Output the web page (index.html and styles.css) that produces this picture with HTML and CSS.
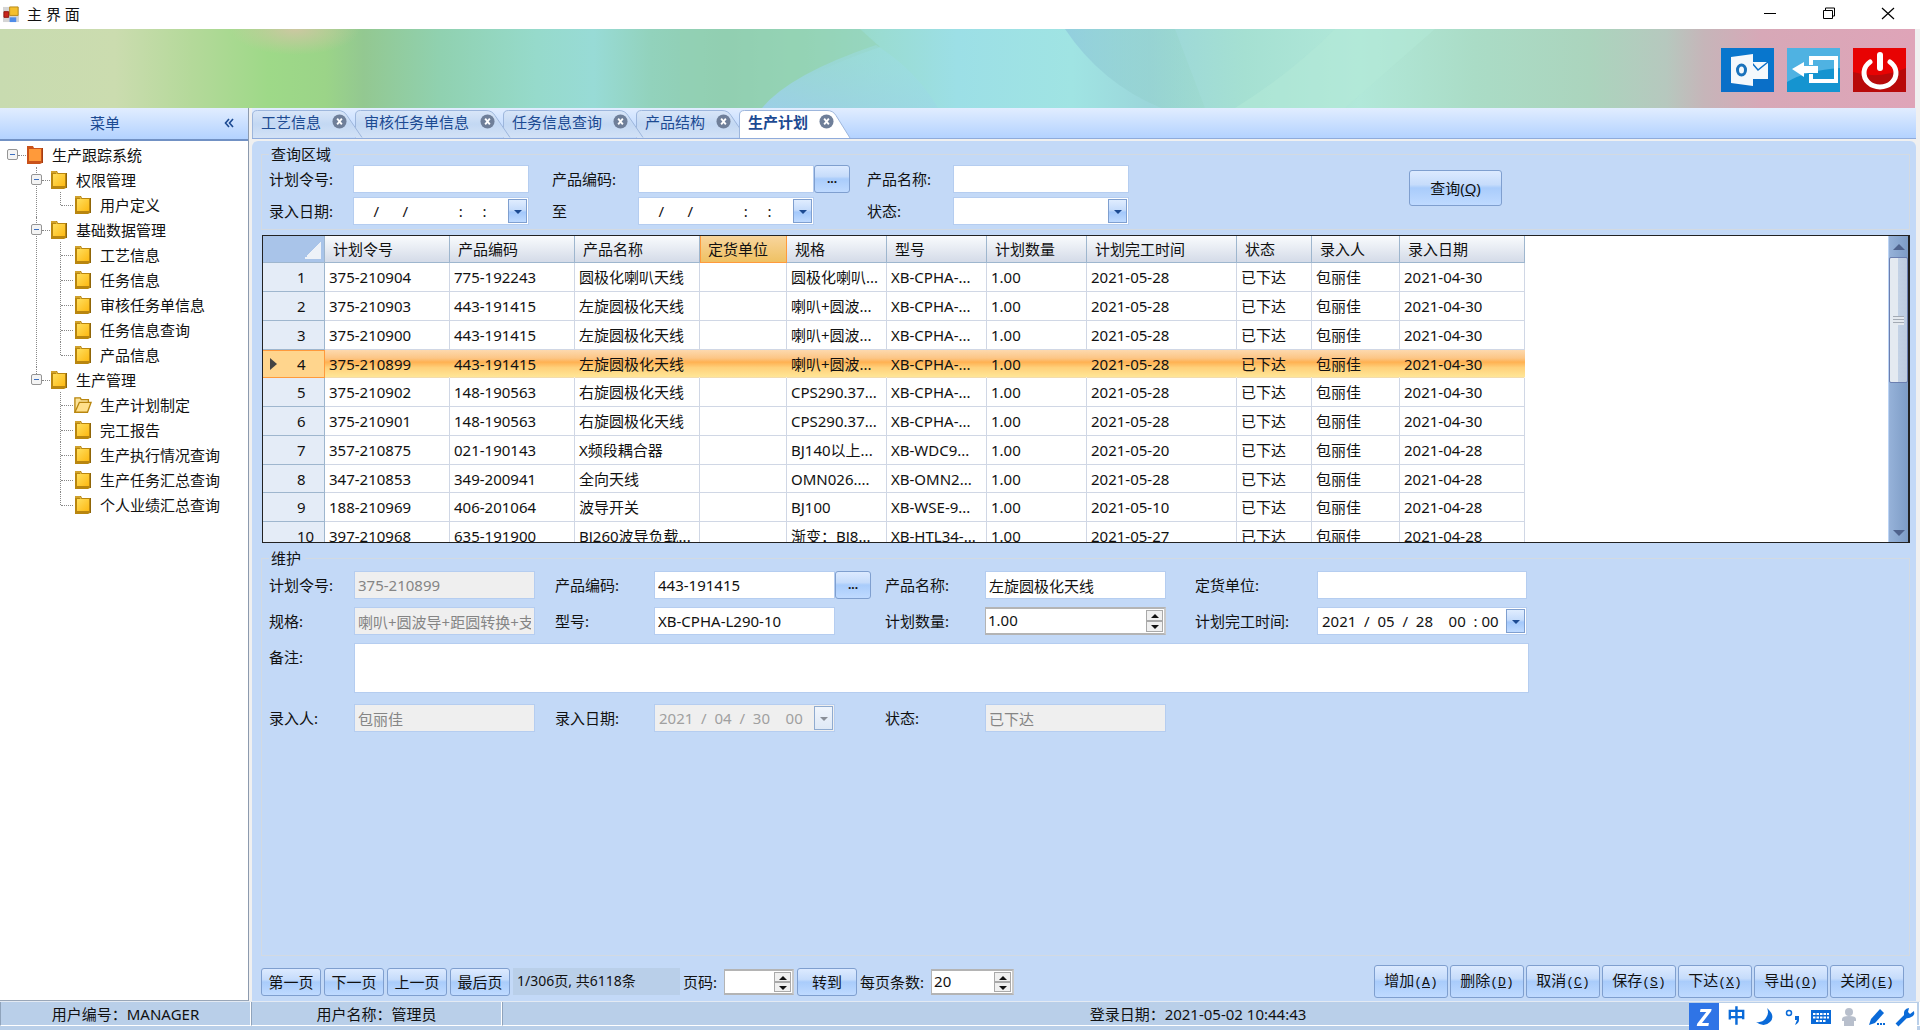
FILE: index.html
```html
<!DOCTYPE html>
<html lang="zh-CN">
<head>
<meta charset="utf-8">
<title>主界面</title>
<link rel="stylesheet" href="styles.css">
</head>
<body>
<svg class="defs" aria-hidden="true">
  <defs>
    <linearGradient id="gold" x1="0" y1="0" x2="1" y2="1"><stop offset="0" stop-color="#ffdf5e"/><stop offset="1" stop-color="#fdb913"/></linearGradient>
    <symbol id="folder" viewBox="0 0 18 20">
      <path d="M1 3V1h6l1 2h8v15l-2 1H1z" fill="#b9860f"/>
      <path d="M3 4h12v12H3z" fill="url(#gold)"/>
      <path d="M1 2h5l1 2" fill="none" stroke="#e8bf4a"/>
      <path d="M16.500 3v15" stroke="#8f6508"/>
    </symbol>
    <symbol id="folder-root" viewBox="0 0 18 20">
      <path d="M1 3V1h6l1 2h8v15l-2 1H1z" fill="#c9521a"/>
      <path d="M3 4h12v12H3z" fill="#ff9a3a"/>
      <path d="M16.500 3v15" stroke="#a33c10"/>
    </symbol>
    <symbol id="folder-open" viewBox="0 0 20 20">
      <path d="M1 18V2h6l1 2h8v4" fill="#fbe39a" stroke="#b9860f" stroke-width="1.500"/>
      <path d="M1 18L6 7h13l-4 11z" fill="#ffe08a" stroke="#b9860f" stroke-width="1.500"/>
    </symbol>
    <symbol id="close" viewBox="0 0 16 16">
      <circle cx="8" cy="8" r="7.500" fill="#6f7f99"/>
      <path d="M5.500 5l5 6M10.500 5l-5 6" stroke="#fff" stroke-width="2"/>
    </symbol>
    <linearGradient id="tabfill" x1="0" y1="0" x2="0" y2="1"><stop offset="0" stop-color="#d9e6f8"/><stop offset=".5" stop-color="#c3d8f3"/><stop offset="1" stop-color="#d3e2f6"/></linearGradient>
  </defs>
</svg>

<header class="titlebar">
  <svg class="app-icon" viewBox="0 0 18 18" aria-hidden="true"><path d="M0 1h17v16H0z" fill="#d5d5d5"/><path d="M7 1h9v9H7z" fill="#f4bf2d" stroke="#b98a18"/><path d="M1 6h5v6H1z" fill="#c9261c" stroke="#8e150d"/><path d="M7 12h7v5H7z" fill="#4f8ce8"/></svg>
  <h1>主 界 面</h1>
  <div class="win-buttons">
    <button aria-label="最小化"><svg viewBox="0 0 14 14"><path d="M1 6.500h12" stroke="#000"/></svg></button>
    <button aria-label="还原"><svg viewBox="0 0 14 14"><path d="M1.500 3.500h9v8h-9zM3.500 3V1h9v8h-2" fill="none" stroke="#000"/></svg></button>
    <button aria-label="关闭"><svg viewBox="0 0 14 14"><path d="M1 1l12 11M13 1l-12 11" stroke="#000" stroke-width="1.200"/></svg></button>
  </div>
</header>

<div class="banner">
  <svg class="banner-art" viewBox="0 0 1915 79" preserveAspectRatio="none" aria-hidden="true">
    <defs>
      <linearGradient id="art">
        <stop offset="0" stop-color="#c8dbb0"/><stop offset=".06" stop-color="#cbdcaf"/><stop offset=".1" stop-color="#b4d99a"/><stop offset=".14" stop-color="#9ed988"/><stop offset=".17" stop-color="#9bd488"/><stop offset=".19" stop-color="#93c891"/><stop offset=".23" stop-color="#90d1b0"/><stop offset=".28" stop-color="#96dacb"/><stop offset=".31" stop-color="#98dbd6"/><stop offset=".34" stop-color="#92d2bc"/><stop offset=".38" stop-color="#8fccaf"/><stop offset=".42" stop-color="#96d6b8"/><stop offset=".46" stop-color="#9adcd2"/><stop offset=".5" stop-color="#9cdfe6"/><stop offset=".56" stop-color="#a0e4e3"/><stop offset=".6" stop-color="#9bd6da"/><stop offset=".65" stop-color="#a5e0d2"/><stop offset=".71" stop-color="#b1e8d9"/><stop offset=".77" stop-color="#aadcc6"/><stop offset=".83" stop-color="#abd4bd"/><stop offset=".87" stop-color="#b6c8be"/><stop offset=".89" stop-color="#c6b5b9"/><stop offset=".92" stop-color="#d7a8b7"/><stop offset="1" stop-color="#dfa4b8"/>
      </linearGradient>
      <radialGradient id="rose"><stop offset="0" stop-color="#d8c4a8"/><stop offset="1" stop-color="#d8c4a8" stop-opacity="0"/></radialGradient>
      <linearGradient id="sky" x1="0" y1="1" x2="1" y2="0"><stop offset="0" stop-color="#9ccfe6"/><stop offset="1" stop-color="#9ce0e4" stop-opacity=".3"/></linearGradient>
      <linearGradient id="fade"><stop offset="0" stop-color="#8fc9dd" stop-opacity=".8"/><stop offset="1" stop-color="#93d4bd" stop-opacity=".2"/></linearGradient>
    </defs>
    <path d="M0 0h1915v79H0z" fill="url(#art)"/>
    <ellipse cx="295" cy="0" rx="65" ry="26" fill="url(#rose)" opacity=".8"/>
    <path d="M680 79V0h180l20 18Q800 45 762 79z" fill="#93d2b2" opacity=".55"/>
    <path d="M762 79Q790 45 876 16q40 25 62 63z" fill="url(#sky)"/>
    <path d="M1065 0h110l30 79h-44q-60-25-96-79z" fill="url(#fade)"/>
    <path d="M1235 79Q1290 45 1335 0h100l-90 79z" fill="#b3ead8" opacity=".5"/>
  </svg>
  <div class="banner-buttons">
    <button aria-label="邮件"><svg viewBox="0 0 53 44" preserveAspectRatio="none"><path d="M0 0h53v44H0z" fill="#0a6fc8"/><path d="M0 0h53v22H0z" fill="#067bd0" opacity=".6"/><path d="M31 14h16v17H31z" fill="#f4f8fc"/><path d="M31 15l6 7 10-8" fill="none" stroke="#0a6fc8" stroke-width="1.500"/><path d="M10 9l22-3v32l-22-3z" fill="#f4f8fc"/><ellipse cx="20.500" cy="22" rx="4" ry="5" fill="none" stroke="#1a72bc" stroke-width="3"/></svg></button>
    <button aria-label="注销"><svg viewBox="0 0 53 44" preserveAspectRatio="none"><path d="M0 0h53v44H0z" fill="#1594d0"/><path d="M0 0h53v20Q20 22 0 34z" fill="#4fb2e2"/><path d="M24 17V10h25v23H24v-7" fill="none" stroke="#fff" stroke-width="4"/><path d="M5 21l12-7v4h14v7H17v4z" fill="#fff"/></svg></button>
    <button aria-label="退出"><svg viewBox="0 0 53 44" preserveAspectRatio="none"><path d="M0 0h53v44H0z" fill="#b80a0a"/><path d="M0 0h53v20Q26 32 0 24z" fill="#e80303"/><path d="M17 14A16 14 0 1 0 37 14" fill="none" stroke="#fff" stroke-width="5" stroke-linecap="round"/><path d="M27 7v13" stroke="#fff" stroke-width="6" stroke-linecap="round"/></svg></button>
  </div>
</div>

<div class="workspace">
  <nav class="sidebar">
    <div class="side-head"><h2>菜单</h2><button aria-label="折叠菜单"><svg viewBox="0 0 10 10"><path d="M5 1L1.500 5 5 9M9 1L5.500 5 9 9" fill="none" stroke="#1c4a92" stroke-width="1.600"/></svg></button></div>
    <ul class="tree">
      <li><div class="node"><button class="toggle" aria-label="折叠"></button><svg><use href="#folder-root"/></svg><a href="#">生产跟踪系统</a></div>
        <ul>
          <li><div class="node"><button class="toggle" aria-label="折叠"></button><svg><use href="#folder"/></svg><a href="#">权限管理</a></div>
            <ul>
              <li><div class="node leaf"><svg><use href="#folder"/></svg><a href="#">用户定义</a></div></li>
            </ul></li>
          <li><div class="node"><button class="toggle" aria-label="折叠"></button><svg><use href="#folder"/></svg><a href="#">基础数据管理</a></div>
            <ul>
              <li><div class="node leaf"><svg><use href="#folder"/></svg><a href="#">工艺信息</a></div></li>
              <li><div class="node leaf"><svg><use href="#folder"/></svg><a href="#">任务信息</a></div></li>
              <li><div class="node leaf"><svg><use href="#folder"/></svg><a href="#">审核任务单信息</a></div></li>
              <li><div class="node leaf"><svg><use href="#folder"/></svg><a href="#">任务信息查询</a></div></li>
              <li><div class="node leaf"><svg><use href="#folder"/></svg><a href="#">产品信息</a></div></li>
            </ul></li>
          <li><div class="node"><button class="toggle" aria-label="折叠"></button><svg><use href="#folder"/></svg><a href="#">生产管理</a></div>
            <ul>
              <li><div class="node leaf"><svg><use href="#folder-open"/></svg><a href="#">生产计划制定</a></div></li>
              <li><div class="node leaf"><svg><use href="#folder"/></svg><a href="#">完工报告</a></div></li>
              <li><div class="node leaf"><svg><use href="#folder"/></svg><a href="#">生产执行情况查询</a></div></li>
              <li><div class="node leaf"><svg><use href="#folder"/></svg><a href="#">生产任务汇总查询</a></div></li>
              <li><div class="node leaf"><svg><use href="#folder"/></svg><a href="#">个人业绩汇总查询</a></div></li>
            </ul></li>
        </ul></li>
    </ul>
  </nav>

  <main class="content">
    <div class="tabs">
      <div class="tab"><svg class="tab-shape" viewBox="0 0 112 28"><path d="M.5 28V5q0-4.500 5-4.500H86q6 0 9 5L110 27.500" fill="url(#tabfill)" stroke="#9db6dc"/></svg><button class="tab-label">工艺信息</button><button class="tab-close" aria-label="关闭"><svg><use href="#close"/></svg></button></div>
      <div class="tab"><svg class="tab-shape" viewBox="0 0 157 28"><path d="M.5 28V5q0-4.500 5-4.500H131q6 0 9 5L155 27.500" fill="url(#tabfill)" stroke="#9db6dc"/></svg><button class="tab-label">审核任务单信息</button><button class="tab-close" aria-label="关闭"><svg><use href="#close"/></svg></button></div>
      <div class="tab"><svg class="tab-shape" viewBox="0 0 142 28"><path d="M.5 28V5q0-4.500 5-4.500H116q6 0 9 5L140 27.500" fill="url(#tabfill)" stroke="#9db6dc"/></svg><button class="tab-label">任务信息查询</button><button class="tab-close" aria-label="关闭"><svg><use href="#close"/></svg></button></div>
      <div class="tab"><svg class="tab-shape" viewBox="0 0 112 28"><path d="M.5 28V5q0-4.500 5-4.500H86q6 0 9 5L110 27.500" fill="url(#tabfill)" stroke="#9db6dc"/></svg><button class="tab-label">产品结构</button><button class="tab-close" aria-label="关闭"><svg><use href="#close"/></svg></button></div>
      <div class="tab active"><svg class="tab-shape" viewBox="0 0 112 28"><path d="M.5 28V5q0-4.500 5-4.500H88q6 0 9 5L111 28" fill="#fff" stroke="#9db6dc"/></svg><button class="tab-label">生产计划</button><button class="tab-close" aria-label="关闭"><svg><use href="#close"/></svg></button></div>
    </div>

    <div class="page">
      <fieldset class="search">
        <legend>查询区域</legend>
        <div class="search-grid">
          <label for="q1">计划令号:</label><input id="q1" class="w176">
          <label for="q2">产品编码:</label><div class="pair"><input id="q2" class="w176"><button class="btn pick">...</button></div>
          <label for="q3">产品名称:</label><input id="q3" class="w176">
          <label for="q4">录入日期:</label><div class="combo w176"><input id="q4" value="    /      /             :     :"><button class="drop" aria-label="展开"></button></div>
          <label for="q5">至</label><div class="combo w176"><input id="q5" value="    /      /             :     :"><button class="drop" aria-label="展开"></button></div>
          <label for="q6">状态:</label><div class="combo w176"><select id="q6"><option></option></select><span class="drop"></span></div>
          <button class="btn query">查询(<u>Q</u>)</button>
        </div>
      </fieldset>

      <div class="grid-wrap">
        <div class="grid-view">
          <table>
            <colgroup><col class="c62"><col class="c125"><col class="c125"><col class="c125"><col class="c87"><col class="c100"><col class="c100"><col class="c100"><col class="c150"><col class="c75"><col class="c88"><col class="c125"></colgroup>
            <thead><tr><th class="corner"></th><th>计划令号</th><th>产品编码</th><th>产品名称</th><th class="hot">定货单位</th><th>规格</th><th>型号</th><th>计划数量</th><th>计划完工时间</th><th>状态</th><th>录入人</th><th>录入日期</th></tr></thead>
            <tbody>
              <tr><th>1</th><td>375-210904</td><td>775-192243</td><td>圆极化喇叭天线</td><td></td><td>圆极化喇叭...</td><td>XB-CPHA-...</td><td>1.00</td><td>2021-05-28</td><td>已下达</td><td>包丽佳</td><td>2021-04-30</td></tr>
              <tr><th>2</th><td>375-210903</td><td>443-191415</td><td>左旋圆极化天线</td><td></td><td>喇叭+圆波...</td><td>XB-CPHA-...</td><td>1.00</td><td>2021-05-28</td><td>已下达</td><td>包丽佳</td><td>2021-04-30</td></tr>
              <tr><th>3</th><td>375-210900</td><td>443-191415</td><td>左旋圆极化天线</td><td></td><td>喇叭+圆波...</td><td>XB-CPHA-...</td><td>1.00</td><td>2021-05-28</td><td>已下达</td><td>包丽佳</td><td>2021-04-30</td></tr>
              <tr class="selected"><th>4</th><td>375-210899</td><td>443-191415</td><td>左旋圆极化天线</td><td></td><td>喇叭+圆波...</td><td>XB-CPHA-...</td><td>1.00</td><td>2021-05-28</td><td>已下达</td><td>包丽佳</td><td>2021-04-30</td></tr>
              <tr><th>5</th><td>375-210902</td><td>148-190563</td><td>右旋圆极化天线</td><td></td><td>CPS290.37...</td><td>XB-CPHA-...</td><td>1.00</td><td>2021-05-28</td><td>已下达</td><td>包丽佳</td><td>2021-04-30</td></tr>
              <tr><th>6</th><td>375-210901</td><td>148-190563</td><td>右旋圆极化天线</td><td></td><td>CPS290.37...</td><td>XB-CPHA-...</td><td>1.00</td><td>2021-05-28</td><td>已下达</td><td>包丽佳</td><td>2021-04-30</td></tr>
              <tr><th>7</th><td>357-210875</td><td>021-190143</td><td>X频段耦合器</td><td></td><td>BJ140以上...</td><td>XB-WDC9...</td><td>1.00</td><td>2021-05-20</td><td>已下达</td><td>包丽佳</td><td>2021-04-28</td></tr>
              <tr><th>8</th><td>347-210853</td><td>349-200941</td><td>全向天线</td><td></td><td>OMN026....</td><td>XB-OMN2...</td><td>1.00</td><td>2021-05-28</td><td>已下达</td><td>包丽佳</td><td>2021-04-28</td></tr>
              <tr><th>9</th><td>188-210969</td><td>406-201064</td><td>波导开关</td><td></td><td>BJ100</td><td>XB-WSE-9...</td><td>1.00</td><td>2021-05-10</td><td>已下达</td><td>包丽佳</td><td>2021-04-28</td></tr>
              <tr><th>10</th><td>397-210968</td><td>635-191900</td><td>BJ260波导负载...</td><td></td><td>渐变：BJ8...</td><td>XB-HTL34-...</td><td>1.00</td><td>2021-05-27</td><td>已下达</td><td>包丽佳</td><td>2021-04-28</td></tr>
            </tbody>
          </table>
        </div>
        <div class="scrollbar" aria-hidden="true"><i class="up"></i><b></b><i class="down"></i></div>
      </div>

      <fieldset class="edit">
        <legend>维护</legend>
        <div class="edit-grid">
          <label for="e1">计划令号:</label><input id="e1" class="w181" value="375-210899" disabled>
          <label for="e2">产品编码:</label><div class="pair"><input id="e2" class="w181" value="443-191415"><button class="btn pick">...</button></div>
          <label for="e3">产品名称:</label><input id="e3" class="w181" value="左旋圆极化天线">
          <label for="e4">定货单位:</label><input id="e4" class="w210">
          <label for="e5">规格:</label><input id="e5" class="w181" value="喇叭+圆波导+距圆转换+支架" disabled>
          <label for="e6">型号:</label><input id="e6" class="w181" value="XB-CPHA-L290-10">
          <label for="e7">计划数量:</label><div class="spin w181"><input id="e7" type="number" step="0.01" value="1.00"><span class="arrows"><button aria-label="增加"></button><button aria-label="减少"></button></span></div>
          <label for="e8">计划完工时间:</label><div class="combo w210"><input id="e8" value="2021  /  05  /  28    00  : 00"><button class="drop" aria-label="展开"></button></div>
          <label for="e9">备注:</label><textarea id="e9"></textarea>
          <label for="e10">录入人:</label><input id="e10" class="w181" value="包丽佳" disabled>
          <label for="e11">录入日期:</label><div class="combo off w181"><input id="e11" value="2021  /  04  /  30    00  :" disabled><button class="drop" aria-label="展开" disabled></button></div>
          <label for="e12">状态:</label><input id="e12" class="w181" value="已下达" disabled>
        </div>
      </fieldset>

      <div class="footer">
        <div class="pager">
          <button class="btn">第一页</button><button class="btn">下一页</button><button class="btn">上一页</button><button class="btn">最后页</button>
          <output>1/306页, 共6118条</output>
          <label for="p1">页码:</label><div class="spin page-no"><input id="p1" type="number"><span class="arrows"><button aria-label="增加"></button><button aria-label="减少"></button></span></div>
          <button class="btn">转到</button>
          <label for="p2">每页条数:</label><div class="spin page-size"><input id="p2" type="number" value="20"><span class="arrows"><button aria-label="增加"></button><button aria-label="减少"></button></span></div>
        </div>
        <div class="actions">
          <button class="btn">增加<span>(<u>A</u>)</span></button><button class="btn">删除<span>(<u>D</u>)</span></button><button class="btn">取消<span>(<u>C</u>)</span></button><button class="btn">保存<span>(<u>S</u>)</span></button><button class="btn">下达<span>(<u>X</u>)</span></button><button class="btn">导出<span>(<u>O</u>)</span></button><button class="btn">关闭<span>(<u>E</u>)</span></button>
        </div>
      </div>
    </div>
  </main>
</div>

<footer class="statusbar">
  <div class="cell user">用户编号：MANAGER</div>
  <div class="cell user">用户名称：管理员</div>
  <div class="cell login">登录日期：2021-05-02 10:44:43</div>
</footer>

<div class="ime">
  <span class="ime-logo">Z</span>
  <span class="ime-mode">中</span>
  <svg viewBox="0 0 20 20"><path d="M12 1a10 10 0 0 1-11 14q8 6 14 0t-3-14z" fill="#0a6ad8"/></svg>
  <svg viewBox="0 0 20 20"><circle cx="6" cy="6" r="2.500" fill="none" stroke="#0a6ad8" stroke-width="1.500"/><path d="M12 9h4v4q0 3-4 5l2-5h-2z" fill="#0a6ad8"/></svg>
  <svg viewBox="0 0 20 20"><path d="M0 3h20v14H0z" fill="#0a6ad8"/><path d="M2 7h16M2 10.500h16M5 14h10" stroke="#fff" stroke-width="2" stroke-dasharray="2.500 1"/></svg>
  <svg viewBox="0 0 20 20"><circle cx="10" cy="5" r="4" fill="#b8bfcc"/><path d="M3 12q0-3 7-3t7 3v2h-2v5H5v-5H3z" fill="#b8bfcc"/></svg>
  <svg viewBox="0 0 20 20"><path d="M2 18l2-6L13 2l4 4-9 10z" fill="#0a6ad8"/><path d="M10 17h9" stroke="#0a6ad8" stroke-width="2" stroke-dasharray="2 1"/></svg>
  <svg viewBox="0 0 20 20"><path d="M2 18L11 9" stroke="#0a6ad8" stroke-width="4"/><path d="M14 1q-6 1-5 7t9 1q2-2 1-5l-4 3-2-2z" fill="#0a6ad8"/></svg>
</div>
</body>
</html>
```
FILE: styles.css
```css
* { box-sizing: border-box; }

body {
  margin: 0;
  min-height: 100vh;
  display: flex;
  flex-direction: column;
  background: #f0f0f0;
  color: #111;
  font: 15px/20px "Noto Sans", "Noto Sans CJK SC", sans-serif;
}

button, input, select, textarea { font: inherit; color: inherit; margin: 0; }
button { padding: 0; border: 0; background: none; }
ul { list-style: none; margin: 0; padding: 0; }
a { color: inherit; text-decoration: none; }
h1, h2 { margin: 0; font-size: 15px; font-weight: 400; }
.defs { position: absolute; width: 0; height: 0; }

/* title bar */
.titlebar { display: flex; align-items: center; height: 29px; padding: 0 25px 1px 3px; background: #fff; }
.app-icon { width: 17px; height: 17px; margin-right: 7px; }
.win-buttons { display: flex; gap: 45px; margin-left: auto; }
.win-buttons button, .win-buttons svg { display: block; width: 14px; height: 14px; }

/* banner */
.banner { position: relative; height: 79px; margin-right: 5px; }
.banner-art { position: absolute; inset: 0; width: 100%; height: 100%; }
.banner-buttons { position: relative; display: flex; justify-content: flex-end; gap: 13px; padding: 19px 9px; }
.banner-buttons svg { display: block; width: 53px; height: 44px; }

.workspace { flex: 1; display: flex; gap: 3px; margin-right: 4px; }

/* sidebar */
.sidebar { width: 249px; background: #fff; border-right: 1px solid #8c9aae; border-bottom: 1px solid #9aa7b8; }
.side-head {
  display: flex; align-items: center; height: 33px; padding: 0 14px 2px 90px;
  background: linear-gradient(#e1edff, #b3d2ff);
  border-bottom: 2px solid #7191c4;
}
.side-head h2 { color: #1c4a92; }
.side-head button { margin-left: auto; }
.side-head svg { display: block; width: 10px; height: 10px; }
.tree { padding: 1px 0 0 7px; }
.tree ul { padding-left: 24px; }
.tree li { position: relative; }
.tree ul > li::before { content: ""; position: absolute; left: 5px; top: 0; bottom: 0; border-left: 1px dotted #888; }
.tree ul > li:last-child::before { bottom: auto; height: 13px; }
.node { position: relative; display: flex; align-items: center; height: 25px; }
.node::after { content: ""; position: absolute; left: 11px; top: 13px; width: 8px; border-top: 1px dotted #888; }
.node.leaf { padding-left: 19px; }
.node.leaf::after { left: 6px; width: 12px; }
.node svg { width: 18px; height: 20px; margin-right: 8px; }
.toggle {
  width: 11px; height: 11px; margin-right: 8px; z-index: 1;
  border: 1px solid #959595; border-radius: 2px;
  background: linear-gradient(#3c6fc0, #3c6fc0) center / 5px 1px no-repeat #f4f4f4;
}

/* tabs */
.content { flex: 1; min-width: 0; display: flex; flex-direction: column; }
.tabs {
  display: flex; align-items: flex-end; height: 31px; margin-bottom: 2px;
  background: linear-gradient(#e1edff, #b3d2ff);
  border-bottom: 1px solid #8fabdb;
}
.tab { position: relative; display: flex; align-items: center; height: 28px; padding: 0 17px 5px 9px; margin-right: -9px; color: #1c4a92; }
.tab:nth-child(1) { z-index: 4; }
.tab:nth-child(2) { z-index: 3; }
.tab:nth-child(3) { z-index: 2; }
.tab:nth-child(4) { z-index: 1; }
.tab.active { z-index: 5; font-weight: 700; }
.tab-shape { position: absolute; inset: 0; width: 100%; height: 28px; }
.tab-label { position: relative; margin-right: 11px; }
.tab-close { position: relative; }
.tab-close svg { display: block; width: 15px; height: 15px; }

/* page */
.page { flex: 1; display: flex; flex-direction: column; padding: 3px 6px 3px 9px; background: #c3d9f7; border-radius: 6px 6px 0 0; }
fieldset { margin: 0; border: 1px solid #d3dae2; min-width: 0; }
legend { padding: 0 4px 0 2px; line-height: 20px; }

input, select, textarea { display: block; height: 28px; padding: 0 3px; border: 1px solid #b5cdf0; background: #fff; border-radius: 0; outline: 0; }
input:disabled { background: #efefef; color: #858585; }
.w176 { width: 176px; }
.w181 { width: 181px; }
.w210 { width: 210px; }

.btn {
  height: 28px; border: 1px solid #7f9fcf; border-radius: 3px; color: #111;
  background: linear-gradient(#dceaff, #c6dcfb 40%, #a9ccfb 50%, #bfdaff);
}
.pick { width: 36px; font-weight: 700; font-size: 12px; }
.pair { display: flex; }

.combo { position: relative; }
.combo input, .combo select { width: 100%; padding: 0 24px 0 4px; appearance: none; white-space: pre; }
.drop {
  position: absolute; right: 2px; top: 2px; width: 19px; height: 24px; pointer-events: none;
  border: 1px solid #7f9fcf; background: linear-gradient(#e0edff, #c6dcfb 45%, #a3c8fb 55%, #bfdaff);
}
.drop::after { content: ""; position: absolute; left: 5px; top: 10px; border: 4px solid transparent; border-top-color: #1c4a92; border-bottom: 0; }
.off .drop { background: linear-gradient(#f0f5fc, #dfe9f6); border-color: #8fabd0; }
.off .drop::after { border-top-color: #8a8f98; }
.combo.off input { color: #a0a0a0; }

.spin { display: flex; height: 28px; padding: 1px; background: #fff; border: 2px solid #b4b4b4; border-right-color: #c9c9c9; border-left-width: 1px; }
.spin input { flex: 1; min-width: 0; height: 100%; border: 0; padding: 0 1px 2px; background: none; appearance: textfield; }
.spin input::-webkit-inner-spin-button { appearance: none; margin: 0; }
.arrows { display: flex; flex-direction: column; width: 17px; }
.arrows button { flex: 1; position: relative; border: 1px solid #a9a9a9; background: #f0f0f0; }
.arrows button::after { content: ""; position: absolute; left: 4px; top: 3px; border: 4px solid transparent; border-bottom-color: #111; border-top: 0; }
.arrows button + button::after { border: 4px solid transparent; border-top-color: #111; border-bottom: 0; }

/* search */
.search { padding: 1px 9px 4px 7px; }
.search-grid { display: grid; grid-template-columns: 84px 199px 86px 229px 86px 456px 93px; grid-template-rows: 28px 28px; row-gap: 4px; align-items: center; }
.query { grid-column: 7; grid-row: 1 / 3; height: 36px; margin-bottom: 14px; }

/* data grid */
.grid-wrap { display: flex; height: 308px; margin: 5px 0 5px 1px; border: 1px solid #222; border-right-width: 2px; background: #fff; }
.grid-view { flex: 1; min-width: 0; overflow: hidden; }
table { border-collapse: separate; border-spacing: 0; table-layout: fixed; width: 1262px; }
.c62 { width: 62px; } .c75 { width: 75px; } .c87 { width: 87px; } .c88 { width: 88px; }
.c100 { width: 100px; } .c125 { width: 125px; } .c150 { width: 150px; }
th, td { font-weight: 400; text-align: left; white-space: nowrap; overflow: hidden; }
thead th { height: 27px; padding: 0 8px; background: linear-gradient(#f9fbfd, #d4dbe8); border-right: 1px solid #9eb6ce; border-bottom: 1px solid #9eb6ce; }
thead .hot { background: linear-gradient(#f8d59d, #efc163); border-color: #ff9a3c; box-shadow: inset 1px 0 #ff9a3c; }
thead .corner { background: linear-gradient(135deg, transparent 50%, #eef2f8 50%) right 3px bottom 3px / 16px 18px no-repeat #a9c4e9; }
tbody tr { height: 29px; }
tbody tr:nth-child(4n) { height: 28px; }
tbody th { padding: 0 0 0 34px; background: #e4ecf7; border-right: 1px solid #9eb6ce; border-bottom: 1px solid #9eb6ce; position: relative; }
td { padding: 0 4px; border-right: 1px solid #d0d7e5; border-bottom: 1px solid #d0d7e5; }
.selected td { background: linear-gradient(#fdd9ae, #fcc686 30%, #ffb152 45%, #ffd07a 65%, #ffe697); border-right-color: transparent; border-bottom-color: #f3dcae; }
.selected th { background: #ffd58d; border-color: #ff9a3c; box-shadow: inset 0 1px #ff9a3c; }
.selected th::before { content: ""; position: absolute; left: 7px; top: 8px; border: 6px solid transparent; border-left: 7px solid #444; border-right: 0; }

.scrollbar { width: 20px; display: flex; flex-direction: column; align-items: center; background: linear-gradient(90deg, #96b2d9, #7d9cc6); border-left: 1px solid #bcd4f5; }
.scrollbar i { border: 6px solid transparent; }
.scrollbar .up { border-bottom-color: #4f628c; border-top: 0; margin: 8px 0 7px; }
.scrollbar .down { border-top-color: #4f628c; border-bottom: 0; margin: auto 0 6px; }
.scrollbar b {
  width: 19px; height: 126px; border: 1px solid #6b7fb0; border-radius: 2px;
  background: repeating-linear-gradient(#a3aab4 0 1px, #e4e9ef 1px 3px) center / 11px 9px no-repeat, linear-gradient(90deg, #e4eaf1 45%, #c3d2e6 45%, #bccbdf);
}

/* edit */
.edit { flex: 1; padding: 3px 9px 4px 7px; }
.edit-grid { display: grid; grid-template-columns: 85px 201px 99px 231px 100px 210px 122px 212px; grid-template-rows: 28px 28px 53px 28px; row-gap: 8px; align-items: center; }
.edit-grid textarea { grid-column: 2 / 9; height: 50px; width: 100%; resize: none; align-self: start; }
.edit-grid label[for="e9"] { align-self: start; padding-top: 4px; }

/* footer */
.footer { display: flex; justify-content: space-between; align-items: center; padding-top: 9px; }
.pager, .actions { display: flex; align-items: center; gap: 3px; }
.pager .btn { width: 60px; }
.pager output { width: 167px; height: 27px; padding: 3px 4px; background: #b9cfe9; font-size: 14px; }
.page-no { width: 70px; margin-left: 4px; }
.page-size { width: 83px; margin-left: 4px; }
.pager .spin { height: 26px; }
.actions { gap: 2px; padding-right: 6px; }
.actions .btn { width: 74px; height: 33px; }
.actions span { font: 13px/20px "Liberation Mono", monospace; }

/* status bar */
.statusbar { display: flex; height: 29px; padding: 0 0 4px; background: #b9cfe9; border-top: 1px solid #e3eaf3; }
.cell { border-left: 1px solid #8fa3bb; border-bottom: 1px solid #fff; border-right: 1px solid #fff; text-align: center; line-height: 24px; }
.user { width: 251px; }
.login { flex: 1; padding-right: 26px; }

/* input method bar */
.ime { position: fixed; right: 3px; bottom: 0; display: flex; align-items: center; gap: 8px; width: 228px; height: 27px; background: #fff; }
.ime svg { width: 20px; height: 20px; flex: 0 1 auto; min-width: 0; }
.ime-logo { width: 30px; flex: none; height: 27px; background: #2f74e6; color: #fff; font-size: 24px; font-weight: 700; font-style: italic; line-height: 27px; text-align: center; }
.ime-mode { width: 20px; flex: none; color: #0a6ad8; font-size: 19px; font-weight: 700; line-height: 27px; }
```
